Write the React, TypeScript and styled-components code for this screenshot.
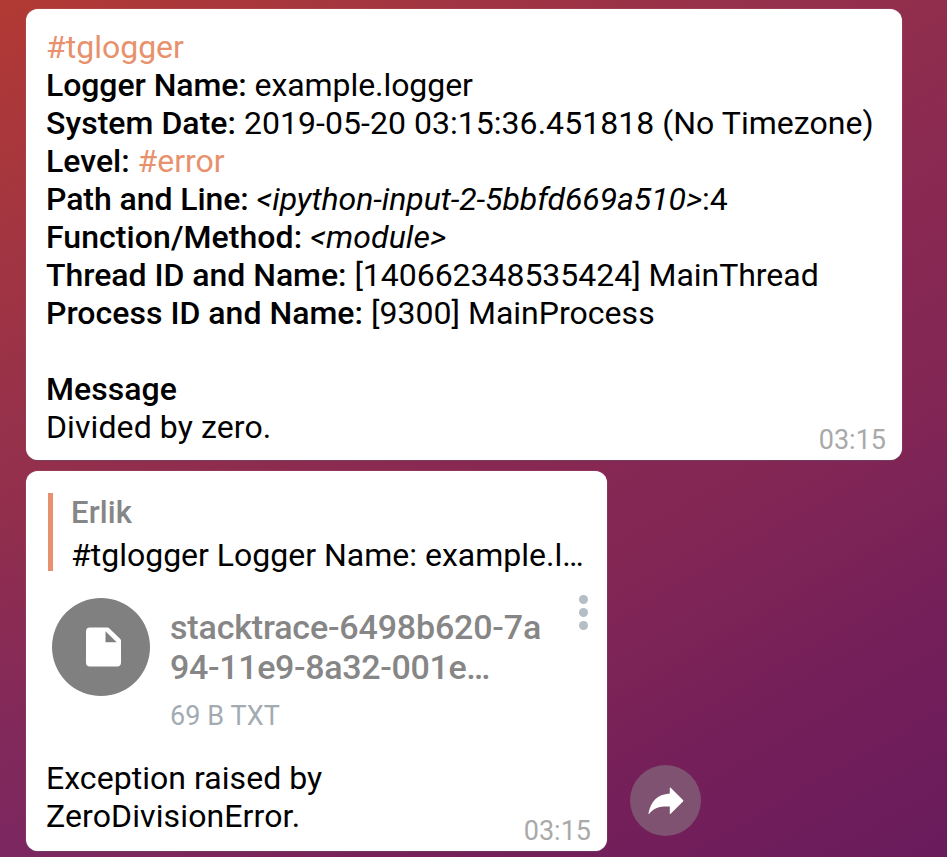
import React from "react";
import styled, { createGlobalStyle } from "styled-components";

const GlobalStyle = createGlobalStyle`
  * { box-sizing: border-box; }
  html, body { margin: 0; padding: 0; }
  body { font-family: Roboto, "Liberation Sans", sans-serif; overflow: hidden; }
`;

const Chat = styled.main`
  width: 947px;
  height: 857px;
  padding: 9px 0 0 26px;
  display: flex;
  flex-direction: column;
  gap: 11px;
  overflow: hidden;
  background:
    radial-gradient(ellipse 420px 330px at 0% 100%, rgba(112, 40, 112, 0.45), rgba(112, 40, 112, 0)),
    linear-gradient(150deg, #b23a34 0%, #96314b 31%, #892952 52%, #822655 67%, #762059 80%, #691b5c 100%);
`;

const MessageRow = styled.div`
  display: flex;
  align-items: flex-end;
`;

const Bubble = styled.article<{ $width: number; $height: number }>`
  flex: none;
  width: ${(p) => p.$width}px;
  height: ${(p) => p.$height}px;
  padding: 19px 16px 0 20px;
  display: flex;
  flex-direction: column;
  border-radius: 12px;
  background: #fff;
  box-shadow: 0 0 1px rgba(255, 255, 255, 0.6), 0 1px 1px rgba(90, 60, 90, 0.55);
`;

const Body = styled.div`
  flex: none;
  font-size: 32px;
  line-height: 38px;
  color: #000;
  white-space: nowrap;
`;

const Line = styled.div<{ $spacing?: number }>`
  height: 38px;
  letter-spacing: ${(p) => p.$spacing ?? 0}px;
`;

const Label = styled.strong`
  font-weight: 500;
`;

const Hashtag = styled.span`
  color: #e8916d;
`;

const Time = styled.time<{ $lift: number }>`
  align-self: flex-end;
  margin-top: ${(p) => -p.$lift}px;
  font-size: 27px;
  line-height: 32px;
  color: #a9a9a9;
`;

const Reply = styled.div`
  flex: none;
  height: 78px;
  margin: 3px 0 0 2px;
  padding-left: 18px;
  border-left: 5px solid #e88f6e;
`;

const ReplyName = styled.div`
  padding-top: 1px;
  font-size: 31px;
  font-weight: 500;
  line-height: 38px;
  letter-spacing: 0.15px;
  color: #868686;
`;

const ReplyText = styled.div`
  margin-top: 4px;
  font-size: 32px;
  line-height: 38px;
  color: #000;
  white-space: nowrap;
`;

const Attachment = styled.div`
  flex: none;
  height: 161px;
  margin-top: 27px;
  padding-left: 6px;
  display: flex;
  align-items: flex-start;
`;

const FileBadge = styled.div`
  flex: none;
  width: 98px;
  height: 98px;
  padding-left: 5px;
  border-radius: 50%;
  display: flex;
  align-items: center;
  justify-content: center;
  background: #808080;
`;

const FileInfo = styled.div`
  flex: none;
  width: 429px;
  padding: 9px 0 0 20px;
`;

const FileName = styled.div`
  font-size: 34px;
  font-weight: 500;
  line-height: 40px;
  color: #868686;
  white-space: nowrap;
`;

const FileNameLine = styled.div<{ $spacing: number }>`
  letter-spacing: ${(p) => p.$spacing}px;
`;

const FileMeta = styled.div`
  margin-top: 13px;
  font-size: 27px;
  line-height: 32px;
  letter-spacing: 0.1px;
  color: #a3abb2;
`;

const Menu = styled.div`
  flex: none;
  margin-top: -3px;
  display: flex;
  flex-direction: column;
  gap: 4px;
`;

const Dot = styled.span`
  width: 9px;
  height: 9px;
  border-radius: 50%;
  background: #b5bdc5;
`;

const ShareButton = styled.button`
  width: 71px;
  height: 71px;
  margin: 0 0 15px 23px;
  padding: 0;
  border: 0;
  border-radius: 50%;
  display: flex;
  align-items: center;
  justify-content: center;
  background: #7e5270;
`;

const DocumentIcon = () => (
  <svg width="35" height="40" viewBox="0 0 35 40">
    <path
      fill="#fff"
      fillRule="evenodd"
      d="M4 .5H21.500Q22.300 .5 22.900 1.100L34.300 12Q35 12.700 35 13.700V35.500Q35 39.500 31 39.500H4Q0 39.500 0 35.500V4.500Q0 .5 4 .5ZM19.500 4.300V15.300H30.700Z"
    />
  </svg>
);

const ShareIcon = () => (
  <svg width="36" height="28" viewBox="0 0 36 28">
    <path
      fill="#fff"
      d="M21.800 1Q21.800 0 22.700 .8L35 13Q35.700 13.700 35 14.400L22.700 26.700Q21.800 27.500 21.800 26.500V19.500C12.500 19 6 20.600 1.500 26.600Q.3 27.600 .5 26C3 14.500 9 7.500 21.800 6.500Z"
    />
  </svg>
);

export default function App() {
  return (
    <>
      <GlobalStyle />
      <Chat>
        <MessageRow>
          <Bubble $width={876} $height={451}>
            <Body>
              <Line><Hashtag>#tglogger</Hashtag></Line>
              <Line $spacing={-0.07}><Label>Logger Name:</Label> example.logger</Line>
              <Line $spacing={0.04}><Label>System Date:</Label> 2019-05-20 03:15:36.451818 (No Timezone)</Line>
              <Line><Label>Level:</Label> <Hashtag>#error</Hashtag></Line>
              <Line $spacing={-0.08}><Label>Path and Line:</Label> <em>&lt;ipython-input-2-5bbfd669a510&gt;</em>:4</Line>
              <Line $spacing={0.07}><Label>Function/Method:</Label> <em>&lt;module&gt;</em></Line>
              <Line $spacing={-0.03}><Label>Thread ID and Name:</Label> [140662348535424] MainThread</Line>
              <Line $spacing={0.02}><Label>Process ID and Name:</Label> [9300] MainProcess</Line>
              <Line />
              <Line $spacing={0.05}><Label>Message</Label></Line>
              <Line $spacing={0.1}>Divided by zero.</Line>
            </Body>
            <Time $lift={22}>03:15</Time>
          </Bubble>
        </MessageRow>
        <MessageRow>
          <Bubble $width={581} $height={380}>
            <Reply>
              <ReplyName>Erlik</ReplyName>
              <ReplyText>#tglogger Logger Name: example.l…</ReplyText>
            </Reply>
            <Attachment>
              <FileBadge><DocumentIcon /></FileBadge>
              <FileInfo>
                <FileName>
                  <FileNameLine $spacing={-0.17}>stacktrace-6498b620-7a</FileNameLine>
                  <FileNameLine $spacing={-0.33}>94-11e9-8a32-001e…</FileNameLine>
                </FileName>
                <FileMeta>69 B TXT</FileMeta>
              </FileInfo>
              <Menu><Dot /><Dot /><Dot /></Menu>
            </Attachment>
            <Body>
              <Line $spacing={0.05}>Exception raised by</Line>
              <Line $spacing={0.12}>ZeroDivisionError.</Line>
            </Body>
            <Time $lift={20}>03:15</Time>
          </Bubble>
          <ShareButton aria-label="Share"><ShareIcon /></ShareButton>
        </MessageRow>
      </Chat>
    </>
  );
}
